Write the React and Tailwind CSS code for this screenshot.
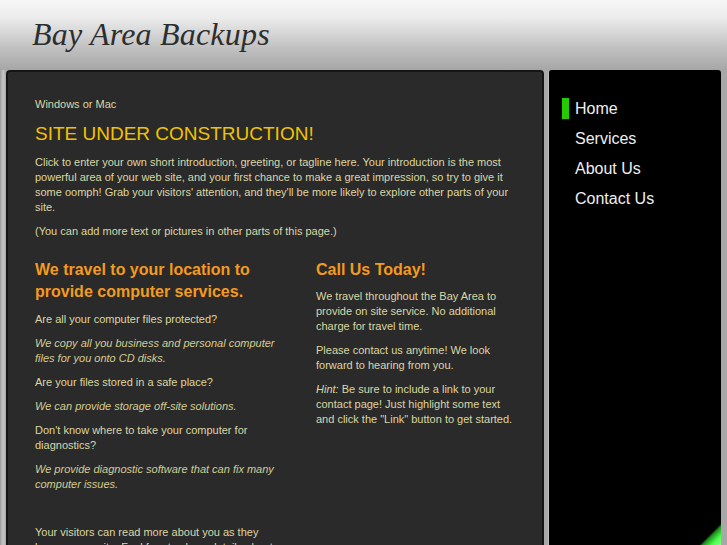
import React from "react";

const sans = { fontFamily: '"Liberation Sans", Arial, sans-serif' };

function P({ children, italic }) {
  return (
    <p className={`text-[11px] leading-[15px] mb-[9px] ${italic ? "italic text-[#d4cc92]" : "text-[#dcd6a4]"}`}>
      {children}
    </p>
  );
}

export default function App() {
  return (
    <div className="h-[545px] w-[727px] overflow-hidden flex flex-col bg-[#a2a2a2]" style={sans}>
      <div className="h-[70px] shrink-0 bg-[linear-gradient(to_bottom,#f6f6f6_0%,#ececec_25%,#c4c4c4_65%,#a6a6a6_100%)] pl-[32px] pt-[14px]">
        <h1
          className="text-[32px] leading-[40px] italic text-[#2e2e2e] tracking-[0.2px]"
          style={{ fontFamily: '"Liberation Serif", "Times New Roman", serif' }}
        >
          Bay Area Backups
        </h1>
      </div>
      <div className="flex-1 min-h-0 flex pl-[6px] pr-[6px] gap-[4px] bg-[linear-gradient(to_right,#9c9c9c_0,#c6c6c6_3px,#a8a8a8_6px,#a8a8a8_100%)]">
        <div className="w-[538px] shrink-0 bg-[#2a2a2a] border-2 border-b-0 border-[#151515] rounded-t-[4px] overflow-hidden pl-[27px] pr-[20px] pt-[25px]">
          <p className="text-[11px] leading-[15px] text-[#dcd6a4] mb-[10px]">Windows or Mac</p>
          <h2 className="text-[19px] leading-[24px] text-[#f2c200] mb-[9px]">SITE UNDER CONSTRUCTION!</h2>
          <P>
            Click to enter your own short introduction, greeting, or tagline here. Your introduction is the most
            powerful area of your web site, and your first chance to make a great impression, so try to give it
            some oomph! Grab your visitors' attention, and they'll be more likely to explore other parts of your
            site.
          </P>
          <P>(You can add more text or pictures in other parts of this page.)</P>
          <div className="flex mt-[20px]">
            <div className="w-[255px] shrink-0">
              <h3 className="text-[16px] leading-[22px] font-bold text-[#f39a1f] mb-[9px]">
                We travel to your location to provide computer services.
              </h3>
              <P>Are all your computer files protected?</P>
              <P italic>We copy all you business and personal computer files for you onto CD disks.</P>
              <P>Are your files stored in a safe place?</P>
              <P italic>We can provide storage off-site solutions.</P>
              <P>Don't know where to take your computer for diagnostics?</P>
              <P italic>We provide diagnostic software that can fix many computer issues.</P>
              <div className="h-[24px]" />
              <P>
                Your visitors can read more about you as they browse your site. Feel free to share details about
                yourself here.
              </P>
            </div>
            <div className="w-[200px] ml-[26px] shrink-0">
              <h3 className="text-[16px] leading-[22px] font-bold text-[#f39a1f] mb-[8px]">Call Us Today!</h3>
              <P>We travel throughout the Bay Area to provide on site service. No additional charge for travel time.</P>
              <P>Please contact us anytime! We look forward to hearing from you.</P>
              <P>
                <span className="italic">Hint:</span> Be sure to include a link to your contact page! Just highlight
                some text and click the "Link" button to get started.
              </P>
            </div>
          </div>
        </div>
        <div className="w-[173px] shrink-0 relative bg-black border-l border-[#bdbdbd] rounded-t-[3px] overflow-hidden pt-[24px]">
          <nav className="flex flex-col">
            {["Home", "Services", "About Us", "Contact Us"].map((item, i) => (
              <div key={item} className="h-[30px] flex items-center relative pl-[26px]">
                {i === 0 && <span className="absolute left-[13px] top-[4px] w-[7px] h-[21px] bg-[#22cc00]" />}
                <span className="text-[16px] text-[#efefef]">{item}</span>
              </div>
            ))}
          </nav>
          <div className="absolute right-0 bottom-0 w-[22px] h-[22px] bg-[linear-gradient(135deg,transparent_50%,#1f8f1f_58%,#44ff44_78%,#99ff99_100%)]" />
        </div>
      </div>
    </div>
  );
}
